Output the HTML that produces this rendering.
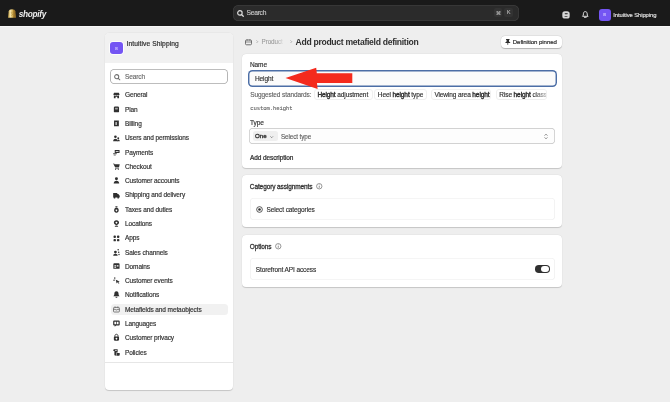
<!DOCTYPE html>
<html><head><meta charset="utf-8">
<style>
*{box-sizing:border-box;margin:0;padding:0}
html,body{width:670px;height:402px;overflow:hidden;background:#eeeeee;font-family:"Liberation Sans",sans-serif;color:#303030}
#wrap{position:absolute;left:0;top:0;width:670px;height:402px;will-change:transform;background:#eeeeee}
.abs{position:absolute}
.t{position:absolute;white-space:nowrap;font-size:6.5px;letter-spacing:-0.1px;line-height:8px;color:#303030;-webkit-text-stroke:0.15px currentColor}
.m{-webkit-text-stroke:0.3px currentColor}
#top{left:0;top:0;width:670px;height:25.5px;background:#1a1a1a}
.card{position:absolute;background:#fff;border-radius:4px;box-shadow:0 0.6px 0.8px rgba(0,0,0,.16),0 0 0 0.3px rgba(0,0,0,.05)}
.nav{position:absolute;left:125px;white-space:nowrap;font-size:6.5px;letter-spacing:-0.1px;line-height:8px;color:#303030;-webkit-text-stroke:0.17px currentColor}
.chip{position:absolute;top:89.4px;height:10.2px;border-radius:3px;border:0.5px solid #efefef;background:#fff}
.chip .t{top:0.8px;left:2.8px}
.chip b{-webkit-text-stroke:0.38px currentColor;font-weight:normal}
svg{position:absolute;overflow:visible}
</style></head><body><div id="wrap">
<div id="top" class="abs">
  <svg style="left:8.3px;top:9.1px" width="8.3" height="9" viewBox="0 0 8.3 9">
    <defs><linearGradient id="g1" x1="0" y1="0" x2="1" y2="0"><stop offset="0" stop-color="#c9a447"/><stop offset="0.3" stop-color="#f5e3a6"/><stop offset="0.55" stop-color="#d9b65a"/><stop offset="0.7" stop-color="#a27a2a"/><stop offset="1" stop-color="#8a6520"/></linearGradient></defs>
    <path d="M0.7 2.2 C0.9 0.9 2.1 0.2 4 0.2 C5.9 0.2 7.2 0.9 7.4 2.2 L8.1 8.8 L0.1 8.8 Z" fill="url(#g1)"/>
    <path d="M4.6 3.3 C4 3 3.2 3.1 3.2 3.8 C3.2 4.6 4.5 4.5 4.5 5.5 C4.5 6.3 3.5 6.5 2.9 6.1" fill="none" stroke="#7a5a1a" stroke-width="0.6" opacity="0.5"/>
  </svg>
  <div class="abs" style="left:18.7px;top:8.8px;font-size:8.3px;line-height:10px;font-weight:bold;font-style:italic;color:#f0f0f0;letter-spacing:-0.3px">shopify</div>
  <div class="abs" style="left:232.5px;top:4.5px;width:286px;height:16.8px;border-radius:5.5px;background:#2b2b2b;box-shadow:inset 0 0 0 0.7px #3d3d3d"></div>
  <svg style="left:237.3px;top:9.7px" width="6.8" height="6.8" viewBox="0 0 6.8 6.8"><circle cx="2.9" cy="2.9" r="2.25" fill="none" stroke="#e0e0e0" stroke-width="1.15"/><path d="M4.6 4.6 L6.3 6.3" stroke="#e0e0e0" stroke-width="1.25" stroke-linecap="round"/></svg>
  <div class="t" style="left:246.6px;top:8.9px;color:#c8c8c8;font-size:6.7px;letter-spacing:-0.28px">Search</div>
  <div class="abs" style="left:493.8px;top:7.6px;width:8.6px;height:9px;border-radius:2px;background:#333333"></div>
  <div class="abs" style="left:503.5px;top:7.6px;width:9.4px;height:9px;border-radius:2px;background:#333333"></div>
  <div class="t" style="left:495.8px;top:8.6px;color:#b0b0b0;font-size:5.2px;-webkit-text-stroke:0.2px currentColor">⌘</div>
  <div class="t" style="left:506.9px;top:8.4px;color:#b0b0b0;font-size:5.2px;-webkit-text-stroke:0.2px currentColor">K</div>
  <!-- db icon -->
  <svg style="left:561.6px;top:11.1px" width="8" height="7.8" viewBox="0 0 8 7.8"><rect x="0.3" y="0.3" width="7.4" height="7.2" rx="2.6" fill="#d6d6d6"/><rect x="2.6" y="2.3" width="3.2" height="0.9" rx="0.45" fill="#1a1a1a"/><rect x="2.4" y="4.9" width="3.2" height="0.8" rx="0.4" fill="#3a3a3a"/></svg>
  <svg style="left:581.9px;top:11.3px" width="6.6" height="7" viewBox="0 0 6.6 7"><path d="M3.3 0.6 C1.9 0.6 1.4 1.8 1.4 2.8 L1.3 4.2 L0.5 5.3 H6.1 L5.3 4.2 L5.2 2.8 C5.2 1.8 4.7 0.6 3.3 0.6 Z" fill="none" stroke="#dedede" stroke-width="1" stroke-linejoin="round"/><path d="M2.4 6.3 H4.2" stroke="#dedede" stroke-width="1" stroke-linecap="round"/></svg>
  <div class="abs" style="left:598.5px;top:8.7px;width:12.3px;height:12.3px;border-radius:3px;background:#7455f3"></div>
  <div class="t" style="left:602.9px;top:11.2px;font-size:3.6px;color:#cfc3ff;-webkit-text-stroke:0.1px currentColor">IS</div>
  <div class="t" style="left:613.3px;top:11px;font-size:5.9px;color:#e3e3e3;-webkit-text-stroke:0.15px currentColor">Intuitive Shipping</div>
</div>
<div class="abs" style="left:0;top:25.5px;width:670px;height:1.3px;background:#f7f7f7"></div>

<!-- sidebar -->
<div class="card" style="left:104.8px;top:32.6px;width:128.2px;height:357px;overflow:hidden">
  <div class="abs" style="left:0;top:0;width:128.2px;height:30.7px;background:#f1f1f1"></div>
  <div class="abs" style="left:0;top:329.3px;width:128.2px;height:0.6px;background:#e6e6e6"></div>
</div>
<div class="abs" style="left:110.3px;top:42px;width:12.3px;height:12.1px;border-radius:3px;background:#7455f3;box-shadow:0 0 0 0.8px #fff"></div>
<div class="t" style="left:114.7px;top:44.5px;font-size:3.6px;color:#cfc3ff;-webkit-text-stroke:0.1px currentColor">IS</div>
<div class="t" style="left:126.5px;top:40.3px;font-size:6.7px;letter-spacing:0.08px;-webkit-text-stroke:0.2px currentColor">Intuitive Shipping</div>
<div class="abs" style="left:110.2px;top:69.2px;width:117.8px;height:14.4px;border-radius:4.5px;background:#fff;box-shadow:inset 0 0 0 0.85px #a8a8a8"></div>
<svg style="left:113.5px;top:73.5px" width="6.2" height="6.2" viewBox="0 0 6.2 6.2"><circle cx="2.7" cy="2.7" r="2.05" fill="none" stroke="#707070" stroke-width="1.05"/><path d="M4.3 4.3 L5.8 5.8" stroke="#707070" stroke-width="1.1" stroke-linecap="round"/></svg>
<div class="t" style="left:125px;top:72.5px;color:#6b6b6b">Search</div>
<div class="abs" style="left:110.8px;top:303.8px;width:117.5px;height:11.6px;border-radius:3.5px;background:#f1f1f1"></div>

<div class="nav" style="top:91.05px">General</div>
<div class="nav" style="top:106.05px">Plan</div>
<div class="nav" style="top:120.05px">Billing</div>
<div class="nav" style="top:134.05px">Users and permissions</div>
<div class="nav" style="top:149.05px">Payments</div>
<div class="nav" style="top:163.05px">Checkout</div>
<div class="nav" style="top:177.05px">Customer accounts</div>
<div class="nav" style="top:191.05px">Shipping and delivery</div>
<div class="nav" style="top:206.05px">Taxes and duties</div>
<div class="nav" style="top:220.05px">Locations</div>
<div class="nav" style="top:234.05px">Apps</div>
<div class="nav" style="top:249.05px">Sales channels</div>
<div class="nav" style="top:263.05px">Domains</div>
<div class="nav" style="top:277.05px">Customer events</div>
<div class="nav" style="top:291.05px">Notifications</div>
<div class="nav" style="top:306.05px">Metafields and metaobjects</div>
<div class="nav" style="top:320.05px">Languages</div>
<div class="nav" style="top:334.05px">Customer privacy</div>
<div class="nav" style="top:349.05px">Policies</div>

<!-- nav icons -->
<svg style="left:112.9px;top:92.35px" width="6.9" height="6.9" viewBox="0 0 20 20" fill="#303030"><path d="M3 2 H17 L19 7.5 C19 9 17.6 9.8 16.4 9.8 C15.2 9.8 14 9 13.8 8 C13.4 9 12.2 9.8 10 9.8 C7.8 9.8 6.6 9 6.2 8 C6 9 4.8 9.8 3.6 9.8 C2.4 9.8 1 9 1 7.5 Z"/><path d="M2.5 11 H17.5 V18 H12.5 V13.5 H7.5 V18 H2.5 Z"/></svg>
<svg style="left:112.9px;top:106.25px" width="6.9" height="6.9" viewBox="0 0 20 20" fill="#303030"><rect x="2.5" y="1.5" width="15" height="17" rx="3.5"/><rect x="6" y="5" width="8" height="5" rx="1" fill="#fff" opacity=".55"/></svg>
<svg style="left:112.9px;top:120.15px" width="6.9" height="6.9" viewBox="0 0 20 20" fill="#303030"><path d="M3 1.5 H17 V18.5 H3 Z M7.5 5.5 V14.5 H10.5 V5.5 Z" fill-rule="evenodd"/></svg>
<svg style="left:112.9px;top:134.55px" width="6.9" height="6.9" viewBox="0 0 20 20" fill="#303030"><circle cx="7" cy="5" r="3.8"/><path d="M0.5 18.5 C0.5 14 2.8 11 7 11 C11.2 11 13.5 14 13.5 18.5 Z"/><circle cx="15.2" cy="9.2" r="2.8"/><path d="M12 18.5 C12 15.5 13.5 13.2 15.7 13.2 C18 13.2 19.5 15.5 19.5 18.5 Z"/></svg>
<svg style="left:112.9px;top:148.95px" width="6.9" height="6.9" viewBox="0 0 20 20" fill="#303030"><path d="M5 3 H19 V11.5 H5 Z M8 6 V8 H16 V6 Z" fill-rule="evenodd"/><path d="M0.5 12.5 H11 V15 H0.5 Z"/><path d="M2 16.5 H8 V18.5 H2 Z"/></svg>
<svg style="left:112.9px;top:162.95px" width="6.9" height="6.9" viewBox="0 0 20 20" fill="#303030"><path d="M0.5 1.5 H3.5 L4.2 3.5 H19.5 L17.5 12.5 H6 Z"/><path d="M6 13.5 H17 L16.6 16 H7 Z"/><circle cx="7.5" cy="17.8" r="1.7"/><circle cx="15.5" cy="17.8" r="1.7"/></svg>
<svg style="left:112.9px;top:177.45px" width="6.9" height="6.9" viewBox="0 0 20 20" fill="#303030"><circle cx="10" cy="5" r="4.3"/><path d="M2 19 C2 14.5 5 11 10 11 C15 11 18 14.5 18 19 Z"/></svg>
<svg style="left:112.9px;top:191.65px" width="6.9" height="6.9" viewBox="0 0 20 20" fill="#303030"><path d="M0.5 3 H12.5 V6 H15.5 L19.5 11 V16 H0.5 Z"/><circle cx="4.5" cy="16.5" r="2.5"/><circle cx="15" cy="16.5" r="2.5"/></svg>
<svg style="left:112.9px;top:205.55px" width="6.9" height="6.9" viewBox="0 0 20 20" fill="#303030"><path d="M6.5 0.5 H13.5 L12 4 H8 Z"/><path d="M7.5 5 C2 7 1 19.5 10 19.5 C19 19.5 18 7 12.5 5 Z M10 10 A2.5 2.5 0 1 0 10.01 10 Z" fill-rule="evenodd"/></svg>
<svg style="left:112.9px;top:220.15px" width="6.9" height="6.9" viewBox="0 0 20 20" fill="#303030"><path d="M10 0.5 C4.8 0.5 2.5 4 2.5 7.5 C2.5 11.5 6.5 14 10 16 C13.5 14 17.5 11.5 17.5 7.5 C17.5 4 15.2 0.5 10 0.5 Z M10 5 A2.6 2.6 0 1 0 10.01 5 Z" fill-rule="evenodd"/><rect x="5" y="17" width="10" height="2.5" rx="1.2"/></svg>
<svg style="left:112.9px;top:234.65px" width="6.9" height="6.9" viewBox="0 0 20 20" fill="#303030"><rect x="1.5" y="1.5" width="7" height="7" rx="2.5"/><rect x="11.5" y="1.5" width="7" height="7" rx="2.5"/><rect x="1.5" y="11.5" width="7" height="7" rx="2.5"/><rect x="11.5" y="11.5" width="7" height="7" rx="2.5"/></svg>
<svg style="left:112.9px;top:248.55px" width="6.9" height="6.9" viewBox="0 0 20 20" fill="#303030"><circle cx="7" cy="9" r="4"/><path d="M0.5 19.5 C0.5 16 3 13.5 7 13.5 C11 13.5 13.5 16 13.5 19.5 Z"/><circle cx="15" cy="2.5" r="2.2"/><circle cx="16.5" cy="9.5" r="2.2"/><circle cx="17.5" cy="16" r="2"/></svg>
<svg style="left:112.9px;top:263.35px" width="6.9" height="6.9" viewBox="0 0 20 20" fill="#303030"><path d="M1 3.5 C1 2 2 1 3.5 1 H16.5 C18 1 19 2 19 3.5 V17 H1 Z M4 6.5 V10 H9 V6.5 Z M11 6.5 V10 H16 V6.5 Z M4 12 V14.5 H9 V12 Z" fill-rule="evenodd"/></svg>
<svg style="left:112.9px;top:277.25px" width="6.9" height="6.9" viewBox="0 0 20 20" fill="#303030"><rect x="4" y="0.5" width="2.5" height="6"/><rect x="0.5" y="8" width="5" height="2.5"/><path d="M8 8 L19.5 13 L15 14.5 L18.5 18.5 L16.5 19.5 L13 15.5 L10.5 19 Z"/></svg>
<svg style="left:112.9px;top:290.95px" width="6.9" height="6.9" viewBox="0 0 20 20" fill="#303030"><path d="M10 0.5 C5.5 0.5 4 4 4 7.5 L3.5 11.5 L1 15 H19 L16.5 11.5 L16 7.5 C16 4 14.5 0.5 10 0.5 Z"/><path d="M7 16.5 H13 C13 18.5 11.8 19.5 10 19.5 C8.2 19.5 7 18.5 7 16.5 Z"/></svg>
<svg style="left:112.9px;top:305.95px" width="6.9" height="6.9" viewBox="0 0 20 20" fill="#303030"><g fill="none" stroke="#4a4a4a" stroke-width="2"><rect x="1.5" y="4" width="17" height="13.5" rx="2.5"/><path d="M1.5 9.5 H6.5 L8 11.5 H12 L13.5 9.5 H18.5"/><path d="M6 1.5 V4.5 M14 1.5 V4.5"/></g></svg>
<svg style="left:112.9px;top:319.65px" width="6.9" height="6.9" viewBox="0 0 20 20" fill="#303030"><path d="M3 1.5 H17 C18.4 1.5 19.5 2.6 19.5 4 V13.5 C19.5 14.9 18.4 16 17 16 H9 L5 19.5 V16 H3 C1.6 16 0.5 14.9 0.5 13.5 V4 C0.5 2.6 1.6 1.5 3 1.5 Z M4 5 V12.5 H9 V5 Z M11 5 V12.5 H16 V5 Z" fill-rule="evenodd"/></svg>
<svg style="left:112.9px;top:333.95px" width="6.9" height="6.9" viewBox="0 0 20 20" fill="#303030"><path d="M5.5 8 V5.5 C5.5 2.5 7.5 0.8 10 0.8 C12.5 0.8 14.5 2.5 14.5 5.5 V8" fill="none" stroke="#303030" stroke-width="2.6"/><path d="M2.5 9.5 C2.5 8.4 3.4 7.5 4.5 7.5 H15.5 C16.6 7.5 17.5 8.4 17.5 9.5 V17 C17.5 18.4 16.4 19.5 15 19.5 H5 C3.6 19.5 2.5 18.4 2.5 17 Z M10 11 A2.5 2.5 0 1 0 10.01 11 Z" fill-rule="evenodd"/></svg>
<svg style="left:112.9px;top:348.55px" width="6.9" height="6.9" viewBox="0 0 20 20" fill="#303030"><path d="M1 3.5 C1 1.5 2.5 0.5 4 0.5 H13.5 V10.5 H9.5 V17 C9.5 18.5 8.5 19.5 7 19.5 C5 19.5 4 18 4 16 V6 H1 Z"/><path d="M10.5 11.5 H19.5 V16.5 C19.5 18.2 18.2 19.5 16.5 19.5 H9 C10 18.8 10.5 18 10.5 17 Z"/><rect x="6" y="3.5" width="5" height="2" fill="#fff"/></svg>

<!-- breadcrumb + title -->
<svg style="left:245.3px;top:38.6px" width="7" height="6.2" viewBox="0 0 7 6.2"><rect x="0.5" y="1" width="6" height="4.8" rx="1" fill="none" stroke="#616161" stroke-width="0.9"/><path d="M0.7 3 H6.3" stroke="#616161" stroke-width="0.7"/><path d="M2.1 0.3 V1.6 M4.9 0.3 V1.6" stroke="#616161" stroke-width="0.8"/></svg>
<svg style="left:255.7px;top:40.4px" width="2.4" height="3.4" viewBox="0 0 2.4 3.4"><path d="M0.5 0.4 L1.8 1.7 L0.5 3" fill="none" stroke="#9a9a9a" stroke-width="0.7"/></svg>
<div class="t" style="left:261.6px;top:38.1px;font-size:6.3px;color:#9c9c9c;-webkit-text-stroke:0.1px currentColor">Product</div>
<div class="abs" style="left:276px;top:36px;width:10px;height:10px;background:linear-gradient(90deg,rgba(238,238,238,0),#eeeeee 90%)"></div>
<svg style="left:290px;top:40.4px" width="2.4" height="3.4" viewBox="0 0 2.4 3.4"><path d="M0.5 0.4 L1.8 1.7 L0.5 3" fill="none" stroke="#9a9a9a" stroke-width="0.7"/></svg>
<div class="t" style="left:295.5px;top:36.8px;font-size:8.6px;line-height:10px;font-weight:bold;letter-spacing:-0.29px;color:#303030;-webkit-text-stroke:0px">Add product metafield definition</div>

<div class="card" style="left:500.7px;top:36px;width:61.2px;height:11.8px;border-radius:4px;box-shadow:0 0.6px 0.8px rgba(0,0,0,.22),0 0 0 0.4px rgba(0,0,0,.07)"></div>
<svg style="left:505px;top:39.2px" width="5.6" height="5.8" viewBox="0 0 5.6 5.8" fill="#303030"><path d="M1 0 H4.6 V0.8 L4 1.1 V2.4 L5.3 3.6 V4.1 H0.3 V3.6 L1.6 2.4 V1.1 L1 0.8 Z"/><rect x="2.4" y="4" width="0.8" height="1.8"/></svg>
<div class="t" style="left:512.8px;top:37.9px;font-size:6.1px;letter-spacing:-0.08px;-webkit-text-stroke:0.2px currentColor">Definition pinned</div>

<!-- card 1 -->
<div class="card" style="left:242.4px;top:53.5px;width:319.4px;height:114.6px"></div>
<div class="t" style="left:250px;top:61px">Name</div>
<div class="abs" style="left:248.3px;top:70.2px;width:308.4px;height:16.4px;border-radius:4.5px;background:#fbfbfb;box-shadow:inset 0 0 0 1.45px #4c6ea6"></div>
<div class="t" style="left:255px;top:74.6px">Height</div>
<div class="t" style="left:250.2px;top:90.7px;color:#616161;-webkit-text-stroke:0.12px currentColor">Suggested standards:</div>
<div class="chip" style="left:313.6px;width:59.5px"><div class="t"><b>Height</b> adjustment</div></div>
<div class="chip" style="left:374px;width:52.5px"><div class="t">Heel <b>height</b> type</div></div>
<div class="chip" style="left:430.6px;width:60.8px"><div class="t">Viewing area <b>height</b></div></div>
<div class="chip" style="left:495.5px;width:51.7px;overflow:hidden"><div class="t">Rise <b>height</b> class</div><div class="abs" style="left:36px;top:0;width:15px;height:9px;background:linear-gradient(90deg,rgba(255,255,255,0),rgba(255,255,255,.75))"></div></div>
<div class="t" style="left:250.2px;top:105.4px;font-family:'Liberation Mono',monospace;font-size:5.6px;color:#616161;-webkit-text-stroke:0.1px currentColor">custom.height</div>
<div class="t" style="left:250px;top:119.4px">Type</div>
<div class="abs" style="left:249.3px;top:128.1px;width:306.2px;height:16.4px;border-radius:4px;background:#fdfdfd;box-shadow:inset 0 0 0 0.7px #c4c4c4"></div>
<div class="abs" style="left:252.7px;top:131.4px;width:25.3px;height:9.7px;border-radius:2.5px;background:#efefef"></div>
<div class="t" style="left:255.1px;top:131.9px;font-size:6.2px;-webkit-text-stroke:0.32px currentColor">One</div>
<svg style="left:270.3px;top:135.6px" width="3.4" height="2.2" viewBox="0 0 3.4 2.2"><path d="M0.4 0.4 L1.7 1.7 L3 0.4" fill="none" stroke="#6a6a6a" stroke-width="0.75"/></svg>
<div class="t" style="left:281px;top:132.6px;color:#5a5a5a;font-size:6.3px;-webkit-text-stroke:0.12px currentColor">Select type</div>
<svg style="left:544.3px;top:132.5px" width="4" height="7" viewBox="0 0 4 7"><path d="M0.6 2.6 L2 1.2 L3.4 2.6 M0.6 4.4 L2 5.8 L3.4 4.4" fill="none" stroke="#616161" stroke-width="0.75"/></svg>
<div class="t" style="left:250px;top:153.8px;-webkit-text-stroke:0.24px currentColor">Add description</div>

<!-- card 2 -->
<div class="card" style="left:242.3px;top:175.3px;width:319.6px;height:52.2px"></div>
<div class="t" style="left:249.8px;top:182.9px;-webkit-text-stroke:0.27px currentColor">Category assignments</div>
<svg style="left:316px;top:183.3px" width="6.5" height="6.5" viewBox="0 0 6.5 6.5"><circle cx="3.25" cy="3.25" r="2.7" fill="none" stroke="#616161" stroke-width="0.65"/><path d="M3.25 2.8 V4.8" stroke="#616161" stroke-width="0.7"/><circle cx="3.25" cy="1.85" r="0.4" fill="#616161"/></svg>
<div class="abs" style="left:249.7px;top:198px;width:305.4px;height:22px;border-radius:4px;box-shadow:inset 0 0 0 0.6px #ececec"></div>
<svg style="left:256.1px;top:206px" width="7" height="7" viewBox="0 0 7 7"><circle cx="3.5" cy="3.5" r="2.85" fill="none" stroke="#303030" stroke-width="0.8"/><circle cx="3.5" cy="3.5" r="1.3" fill="#303030"/></svg>
<div class="t" style="left:266.5px;top:205.7px">Select categories</div>

<!-- card 3 -->
<div class="card" style="left:242.3px;top:235.3px;width:319.6px;height:52.2px"></div>
<div class="t" style="left:249.8px;top:242.9px;-webkit-text-stroke:0.27px currentColor">Options</div>
<svg style="left:274.6px;top:243.2px" width="6.5" height="6.5" viewBox="0 0 6.5 6.5"><circle cx="3.25" cy="3.25" r="2.7" fill="none" stroke="#616161" stroke-width="0.65"/><path d="M3.25 2.8 V4.8" stroke="#616161" stroke-width="0.7"/><circle cx="3.25" cy="1.85" r="0.4" fill="#616161"/></svg>
<div class="abs" style="left:249.7px;top:258.2px;width:305px;height:21.6px;border-radius:4px;box-shadow:inset 0 0 0 0.6px #ececec"></div>
<div class="t" style="left:255.7px;top:265.7px">Storefront API access</div>
<div class="abs" style="left:535.1px;top:265.4px;width:14.5px;height:7.5px;border-radius:3.75px;background:#303030"></div>
<div class="abs" style="left:541.3px;top:266.1px;width:7.8px;height:6.1px;border-radius:3.05px;background:#fff"></div>

<!-- red arrow -->
<svg style="left:0;top:0" width="670" height="402" viewBox="0 0 670 402"><path d="M285.5 78.1 L316.2 67.8 L316.8 73.2 L352.3 73.2 L352.3 83.1 L317 83.1 L317.6 88.9 Z" fill="#f42a1d"/></svg>
</div></body></html>
